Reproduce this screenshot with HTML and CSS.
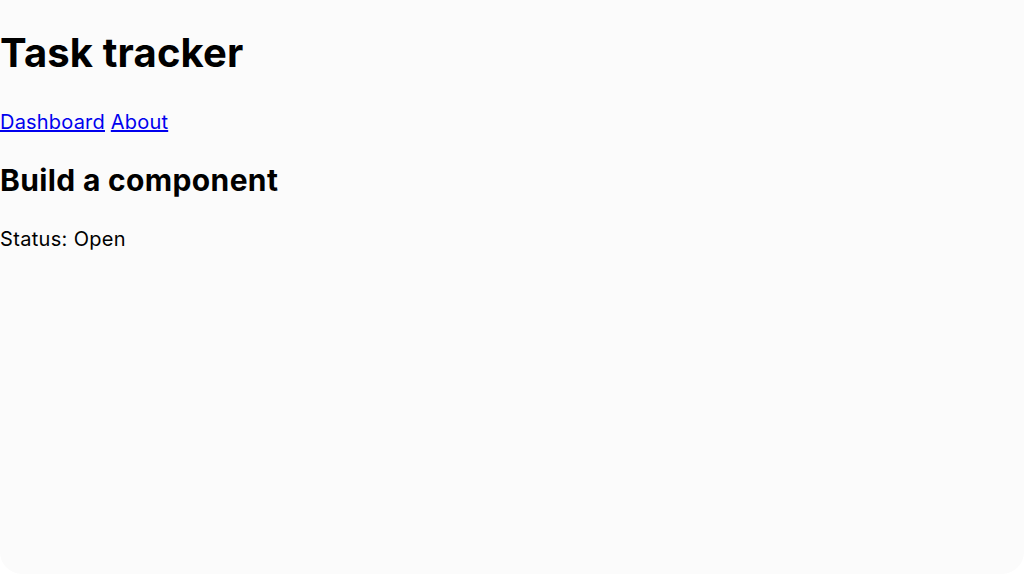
FILE: index.html
```html
<!DOCTYPE html>
<html>
<head>
<meta charset="utf-8">
<link rel="stylesheet" href="styles.css">
</head>
<body>
<div class="window">
  <h1 class="title">Task tracker</h1>
  <nav class="nav"><a href="#">Dashboard</a> <a href="#">About</a></nav>
  <h2 class="task">Build a component</h2>
  <p class="status">Status: Open</p>
</div>
</body>
</html>
```

FILE: styles.css
```css
html, body {
  margin: 0;
  padding: 0;
  background: #ffffff;
}
.window {
  box-sizing: border-box;
  width: 1024px;
  height: 574px;
  background: #fbfbfb;
  border-radius: 0 0 22px 22px;
  overflow: hidden;
  font-family: Inter, "Noto Sans", sans-serif;
  font-size: 20px;
  color: #000;
}
.title {
  font-size: 40px;
  font-weight: 700;
  letter-spacing: 0.15px;
  margin: 28px 0 33px;
}
.nav {
  margin: 0;
  letter-spacing: 0.2px;
}
.nav a {
  color: #0000ee;
  text-decoration: underline;
}
.task {
  font-size: 30px;
  font-weight: 700;
  letter-spacing: 0.35px;
  margin: 28px 0 0;
}
.status {
  margin: 29px 0 0;
  letter-spacing: 0.33px;
}
```
